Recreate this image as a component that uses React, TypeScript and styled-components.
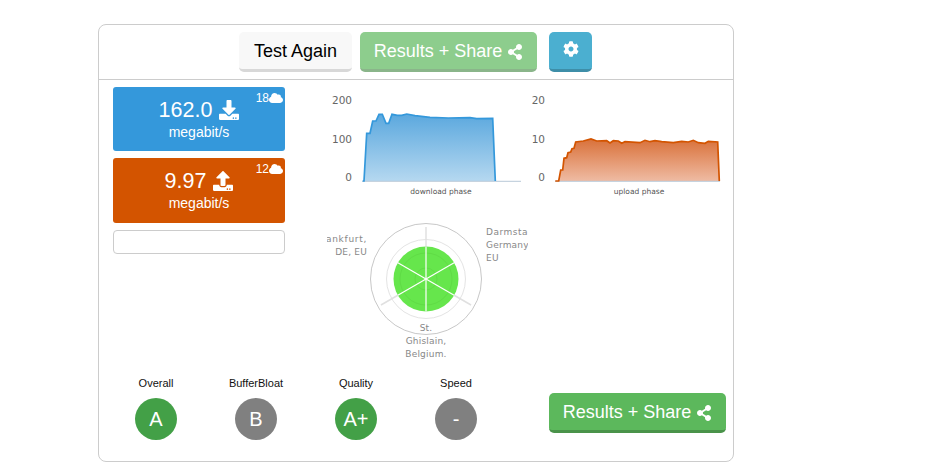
import React from "react";
import styled, { createGlobalStyle } from "styled-components";
import { FaCloud, FaCog, FaDownload, FaShareAlt, FaUpload } from "react-icons/fa";

const Global = createGlobalStyle`
  html, body { margin: 0; padding: 0; background: #fff; font-family: "Liberation Sans", Arial, sans-serif; }
`;

const Page = styled.div`
  padding: 24px 0 0 98px;
`;
const Card = styled.div`
  box-sizing: border-box;
  width: 636px;
  height: 438px;
  border: 1px solid #ccc;
  border-radius: 8px;
  display: flex;
  flex-direction: column;
`;
const Header = styled.div`
  box-sizing: border-box;
  height: 55px;
  padding: 7px 1px 0 0;
  border-bottom: 1px solid #ccc;
  display: flex;
  justify-content: center;
  align-items: flex-start;
`;
const variants = {
  plain: "background:#f8f8f8;border-bottom-color:#d8d8d8;color:#000;",
  faded: "background:#8dcd8d;border-bottom-color:#8ab58a;color:#fff;",
  info: "background:#4bafd0;border-bottom-color:#3e8ea8;color:#fff;",
  success: "background:#5cb85c;border-bottom-color:#4a934a;color:#fff;",
};
const Button = styled.button<{ $kind: keyof typeof variants; $gap?: number }>`
  box-sizing: border-box;
  height: 40px;
  padding: 2px 14px 0;
  margin-right: ${(p) => p.$gap ?? 0}px;
  border: 0;
  border-bottom: 3px solid transparent;
  border-radius: 5px;
  font-family: inherit;
  font-size: 18px;
  line-height: 35px;
  display: inline-flex;
  align-items: center;
  justify-content: center;
  gap: 5px;
  white-space: nowrap;
  ${(p) => variants[p.$kind]}
`;
const TestButton = styled(Button)`
  width: 113px;
  padding-left: 0;
  padding-right: 0;
`;
const ShareButton = styled(Button)`
  width: 177px;
  padding-left: 0;
  padding-right: 0;
`;
const GearButton = styled(Button)`
  width: 43px;
  padding: 9px 0 0;
  align-items: flex-start;
  font-size: 16px;
`;
const Main = styled.div`
  height: 296px;
  padding: 7px 0 0 14px;
  display: flex;
  box-sizing: border-box;
`;
const LeftColumn = styled.div`
  width: 172px;
  display: flex;
  flex-direction: column;
  gap: 7px;
`;
const Tile = styled.div<{ $color: string; $h: number }>`
  position: relative;
  box-sizing: border-box;
  height: ${(p) => p.$h}px;
  border-radius: 3px;
  background: ${(p) => p.$color};
  color: #fff;
  padding-top: 10px;
  text-align: center;
`;
const Speed = styled.div`
  font-size: 21.5px;
  line-height: 26px;
  display: flex;
  justify-content: center;
  align-items: center;
  gap: 7px;
`;
const Unit = styled.div`
  font-size: 14px;
  line-height: 18px;
`;
const Corner = styled.div`
  position: absolute;
  top: 4px;
  right: 2px;
  font-size: 12px;
  line-height: 14px;
  display: flex;
  align-items: center;
`;
const EmptyBox = styled.div`
  height: 24px;
  box-sizing: border-box;
  border: 1px solid #ccc;
  border-radius: 4px;
`;
const Center = styled.div`
  margin: 3px 0 0 25px;
  width: 420px;
`;
const Charts = styled.div`
  display: flex;
`;
const Radar = styled.svg`
  display: block;
  margin: 15px 0 0 17px;
  overflow: hidden;
`;
const Chart = styled.svg`
  display: block;
  overflow: hidden;
`;
const Footer = styled.div`
  padding: 1px 7px 0;
  display: flex;
  align-items: flex-start;
`;
const Grade = styled.div`
  width: 100px;
  display: flex;
  flex-direction: column;
  align-items: center;
  gap: 8px;
`;
const GradeLabel = styled.div`
  font-size: 11px;
  line-height: 13px;
  color: #111;
`;
const GradeBadge = styled.div<{ $green?: boolean }>`
  width: 42px;
  height: 42px;
  border-radius: 50%;
  background: ${(p) => (p.$green ? "#43a047" : "#808080")};
  color: #fff;
  font-size: 20px;
  display: flex;
  align-items: center;
  justify-content: center;
`;
const FooterButton = styled(ShareButton)`
  margin: 16px 0 0 auto;
`;

const dl = [[158,273],[162,273],[170,130],[180,130],[188,93],[198,93],[207,73],[217,73],[228,100],[236,100],[246,73],[262,76],[275,76],[290,72],[315,77],[360,82],[415,84],[480,83],[500,86],[548,85],[556,273]];
const ul = [[76,273],[86,273],[92,240],[98,240],[102,205],[110,203],[114,188],[122,186],[126,176],[132,175],[137,156],[160,153],[183,147],[200,153],[230,152],[240,159],[250,152],[265,153],[275,160],[285,155],[330,158],[345,151],[360,155],[375,152],[395,155],[430,158],[455,154],[475,156],[490,151],[505,158],[525,160],[535,154],[563,156],[568,273]];
const pts = (a: number[][]) => a.map(([x, y]) => `${(x / 3).toFixed(1)},${(y / 3).toFixed(1)}`).join(" ");

const axisStyle = { fontFamily: '"DejaVu Sans", sans-serif', fontSize: 10.5, fill: "#666" };
const captionStyle = { fontFamily: '"DejaVu Sans", sans-serif', fontSize: 7.5, fill: "#555" };

function PhaseChart(p: { id: string; w: number; points: number[][]; labelX: number; labels: string[]; color: string; top: string; bottom: string; caption: string; capX: number; baseEnd: number; baseStart: number }) {
  return (
    <Chart width={p.w} height={110} viewBox={`0 0 ${p.w} 110`}>
      <defs>
        <linearGradient id={p.id} x1="0" y1="0" x2="0" y2="1">
          <stop offset="0" stopColor={p.top} />
          <stop offset="1" stopColor={p.bottom} />
        </linearGradient>
      </defs>
      <text x={p.labelX} y={14} textAnchor="end" style={axisStyle}>{p.labels[0]}</text>
      <text x={p.labelX} y={53} textAnchor="end" style={axisStyle}>{p.labels[1]}</text>
      <text x={p.labelX} y={91} textAnchor="end" style={axisStyle}>0</text>
      <polygon points={pts(p.points)} fill={`url(#${p.id})`} />
      <line x1={p.baseStart} x2={p.baseEnd} y1={91.3} y2={91.3} stroke="#b8c8d8" strokeWidth={1} />
      <polyline points={pts(p.points)} fill="none" stroke={p.color} strokeWidth={1.7} />
      <text x={p.capX} y={104} textAnchor="middle" style={captionStyle}>{p.caption}</text>
    </Chart>
  );
}

const radarText = { fontFamily: '"DejaVu Sans", sans-serif', fontSize: 9, fill: "#888", letterSpacing: 0.2 };
const cx = 99;
const cy = 64;
const spoke = (deg: number, r0: number, r1: number, stroke: string, w: number, key: string) => {
  const a = (deg * Math.PI) / 180;
  return <line key={key} x1={cx + r0 * Math.sin(a)} y1={cy - r0 * Math.cos(a)} x2={cx + r1 * Math.sin(a)} y2={cy - r1 * Math.cos(a)} stroke={stroke} strokeWidth={w} />;
};

function RadarChart() {
  return (
    <Radar width={201} height={150} viewBox="0 0 201 150">
      <circle cx={cx} cy={cy} r={55.5} fill="#fff" stroke="#c8c8c8" strokeWidth={1} />
      <circle cx={cx} cy={cy} r={39.5} fill="none" stroke="#e4e4e4" strokeWidth={1} />
      {[0, 120, 240].map((d) => spoke(d, 32, 52, "#e0e0e0", 1.5, `g${d}`))}
      <circle cx={cx} cy={cy} r={32.5} fill="#66e64c" />
      <circle cx={cx} cy={cy} r={26} fill="none" stroke="#60dc46" strokeWidth={1} />
      <circle cx={cx} cy={cy} r={11} fill="none" stroke="#60dc46" strokeWidth={1} />
      {[0, 60, 120, 180, 240, 300].map((d) => spoke(d, 0, 32.5, "#fff", 1.2, `w${d}`))}
      <text x={40} y={27} textAnchor="end" style={{ ...radarText, letterSpacing: 0.7 }}>Frankfurt,</text>
      <text x={40} y={40} textAnchor="end" style={radarText}>DE, EU</text>
      <text x={159} y={20} style={{ ...radarText, letterSpacing: 0.5 }}>Darmstadt,</text>
      <text x={159} y={33} style={radarText}>Germany</text>
      <text x={159} y={46} style={radarText}>EU</text>
      <text x={99} y={116} textAnchor="middle" style={radarText}>St.</text>
      <text x={99} y={129} textAnchor="middle" style={radarText}>Ghislain,</text>
      <text x={99} y={142} textAnchor="middle" style={radarText}>Belgium.</text>
    </Radar>
  );
}

const grades: { label: string; value: string; green?: boolean }[] = [
  { label: "Overall", value: "A", green: true },
  { label: "BufferBloat", value: "B" },
  { label: "Quality", value: "A+", green: true },
  { label: "Speed", value: "-" },
];

export default function App() {
  return (
    <Page>
      <Global />
      <Card>
        <Header>
          <TestButton $kind="plain" $gap={8}>Test Again</TestButton>
          <ShareButton $kind="faded" $gap={12}>Results + Share <FaShareAlt size={16} /></ShareButton>
          <GearButton $kind="info"><FaCog size={16} /></GearButton>
        </Header>
        <Main>
          <LeftColumn>
            <Tile $color="#3498db" $h={64}>
              <Corner>18<FaCloud size={14} /></Corner>
              <Speed>162.0 <FaDownload size={20} /></Speed>
              <Unit>megabit/s</Unit>
            </Tile>
            <Tile $color="#d35400" $h={65}>
              <Corner>12<FaCloud size={14} /></Corner>
              <Speed>9.97 <FaUpload size={20} /></Speed>
              <Unit>megabit/s</Unit>
            </Tile>
            <EmptyBox />
          </LeftColumn>
          <Center>
            <Charts>
              <PhaseChart id="dlg" w={220} points={dl} labelX={42} labels={["200", "100"]} color="#3498db" top="#5ba8de" bottom="#b5d8f0" caption="download phase" capX={131} baseStart={52} baseEnd={211} />
              <PhaseChart id="ulg" w={200} points={ul} labelX={15} labels={["20", "10"]} color="#d35400" top="#d9713a" bottom="#efbba3" caption="upload phase" capX={109} baseStart={25} baseEnd={190} />
            </Charts>
            <RadarChart />
          </Center>
        </Main>
        <Footer>
          {grades.map((g) => (
            <Grade key={g.label}>
              <GradeLabel>{g.label}</GradeLabel>
              <GradeBadge $green={g.green}>{g.value}</GradeBadge>
            </Grade>
          ))}
          <FooterButton $kind="success">Results + Share <FaShareAlt size={16} /></FooterButton>
        </Footer>
      </Card>
    </Page>
  );
}
